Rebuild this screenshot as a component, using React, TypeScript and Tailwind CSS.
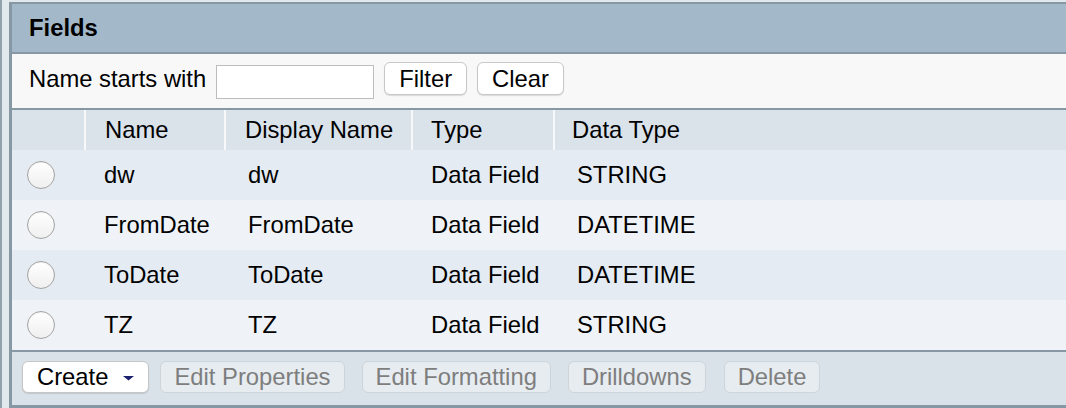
const rows = [
  { name: 'dw', display: 'dw', type: 'Data Field', dataType: 'STRING' },
  { name: 'FromDate', display: 'FromDate', type: 'Data Field', dataType: 'DATETIME' },
  { name: 'ToDate', display: 'ToDate', type: 'Data Field', dataType: 'DATETIME' },
  { name: 'TZ', display: 'TZ', type: 'Data Field', dataType: 'STRING' },
];

function Radio() {
  return (
    <span className="block w-[28px] h-[28px] rounded-full border border-[#a3a3a3] bg-gradient-to-b from-white to-[#efefef] shadow-[inset_0_1px_1px_rgba(0,0,0,0.06)]" />
  );
}

function Button({ children, disabled }: { children: React.ReactNode; disabled?: boolean }) {
  return (
    <button
      className={
        disabled
          ? 'h-[32px] px-[13px] rounded-[6px] border border-[#cdd5db] bg-[#e7ecf0] text-[#7e7e7e] leading-none'
          : 'h-[32px] px-[13px] rounded-[6px] border border-[#c6c6c6] bg-white text-black leading-none shadow-[0_1px_1px_rgba(0,0,0,0.12)]'
      }
    >
      {children}
    </button>
  );
}

export default function App() {
  return (
    <div
      className="h-[408px] w-full overflow-hidden bg-[#e2e9ed] border-l-2 border-[#91a2ad] pl-[7px] pt-[2px] text-[23.8px] text-black"
      style={{ fontFamily: '"Liberation Sans", Arial, sans-serif' }}
    >
      <div className="w-[calc(100%+20px)] border-t-2 border-l-[3px] border-b-[3px] border-[#8698a3]">
        {/* Title bar */}
        <div className="h-[50px] flex items-center pl-[17px] bg-[#a3b9c9] border-b-2 border-[#8698a3] font-bold">
          Fields
        </div>

        {/* Filter row */}
        <div className="h-[56px] flex items-center gap-[10px] pl-[17px] pb-[5px] bg-[#f8f8f8] border-b-2 border-[#8698a3]">
          <span>Name starts with</span>
          <input className="mt-[7px] w-[158px] h-[34px] border border-[#bdbdbd] bg-white outline-none" />
          <button className="h-[33px] px-[14px] rounded-[6px] border border-[#c8c8c8] bg-white leading-none shadow-[0_1px_1px_rgba(0,0,0,0.12)]">
            Filter
          </button>
          <button className="h-[33px] px-[14px] rounded-[6px] border border-[#c8c8c8] bg-white leading-none shadow-[0_1px_1px_rgba(0,0,0,0.12)]">
            Clear
          </button>
        </div>

        {/* Table header */}
        <div className="h-10 flex bg-[#dae2ea]">
          <div className="w-[72px]" />
          <div className="w-[140px] border-l-2 border-[#f6f8fa] pl-[19px] flex items-center">Name</div>
          <div className="w-[187px] border-l-2 border-[#f6f8fa] pl-[19px] flex items-center">Display Name</div>
          <div className="w-[142px] border-l-2 border-[#f6f8fa] pl-[18px] flex items-center">Type</div>
          <div className="flex-1 border-l-2 border-[#f6f8fa] pl-[17px] flex items-center">Data Type</div>
        </div>

        {/* Rows */}
        {rows.map((r, i) => (
          <div
            key={r.name}
            className={`h-[50px] flex items-center ${i % 2 === 0 ? 'bg-[#e4ebf2]' : 'bg-[#eff3f7]'}`}
          >
            <div className="w-[72px] pl-[15px]">
              <Radio />
            </div>
            <div className="w-[140px] pl-[20px]">{r.name}</div>
            <div className="w-[187px] pl-[24px]">{r.display}</div>
            <div className="w-[142px] pl-[20px]">{r.type}</div>
            <div className="flex-1 pl-[24px]">{r.dataType}</div>
          </div>
        ))}

        {/* Footer toolbar */}
        <div className="h-[55px] flex items-center pl-[10px] pb-[3px] bg-[#dae2e9] border-t-2 border-[#8698a3]">
          <button className="h-[32px] pl-[14px] pr-[14px] rounded-[6px] border border-[#c6c6c6] bg-white leading-none flex items-center gap-[15px] shadow-[0_1px_1px_rgba(0,0,0,0.12)]">
            Create
            <svg width="11" height="5" viewBox="0 0 11 5" className="mt-[2px]">
              <polygon points="0,0 11,0 5.5,4.5" fill="#1d206e" />
            </svg>
          </button>
          <div className="ml-[11px]">
            <Button disabled>Edit Properties</Button>
          </div>
          <div className="ml-[17px]">
            <Button disabled>Edit Formatting</Button>
          </div>
          <div className="ml-[17px]">
            <Button disabled>Drilldowns</Button>
          </div>
          <div className="ml-[18px]">
            <Button disabled>Delete</Button>
          </div>
        </div>
      </div>
    </div>
  );
}
